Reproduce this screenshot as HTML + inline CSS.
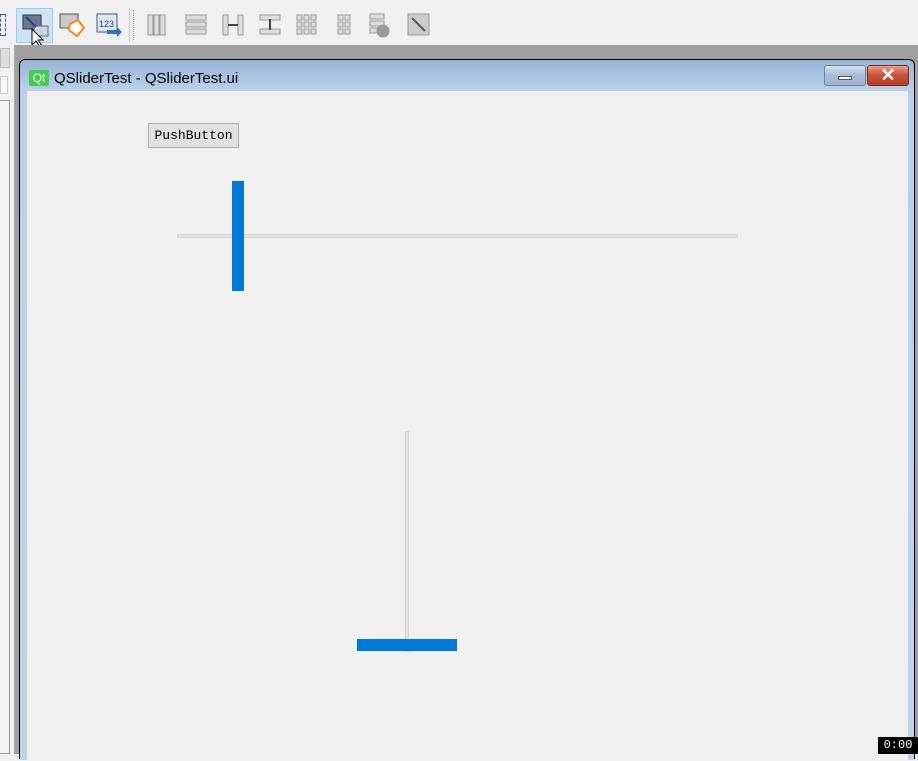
<!DOCTYPE html>
<html><head><meta charset="utf-8"><style>
*{margin:0;padding:0;box-sizing:border-box}
body{width:918px;height:754px;overflow:hidden;background:#f0f0f0;position:relative;font-family:"Liberation Sans",sans-serif}
.a{position:absolute}
</style></head><body>
<!-- toolbar -->
<div class="a" style="left:0;top:0;width:918px;height:45px;background:#f0f0f0"></div>
<div class="a" style="left:0;top:14px;width:6px;height:22px;border:1px dashed #3a5a9a"></div>
<div class="a" style="left:16px;top:8px;width:37px;height:35px;background:#cce4f7;border:1px solid #99c9ef"></div>
<svg class="a" style="left:16px;top:8px" width="37" height="38"><rect x="7" y="7" width="18" height="14" fill="#6a7a8a" stroke="#333"/><rect x="18" y="18" width="14" height="10" fill="#c8d4e0" stroke="#667"/><path d="M10 9 L20 19" stroke="#1a3f8f" stroke-width="2"/><path d="M16 21 L16 37 L20 33 L24 39 L26 38 L22 32 L27 32 Z" fill="#fff" stroke="#000"/></svg>
<svg class="a" style="left:58px;top:12px" width="28" height="26"><rect x="2" y="2" width="18" height="14" fill="#c8c8c8" stroke="#555"/><path d="M12 12 L20 8 L26 16 L19 24 L11 18 Z" fill="#fff" stroke="#f28a1e" stroke-width="2"/></svg>
<svg class="a" style="left:95px;top:12px" width="28" height="26"><rect x="2" y="2" width="20" height="18" fill="#dfe7f2" stroke="#3c5a8a"/><text x="4" y="15" font-size="9" fill="#1a3f8f" font-family="Liberation Sans">123</text><path d="M12 18 L22 18 L22 15 L27 20 L22 25 L22 22 L12 22Z" fill="#2b6fd0"/></svg>
<div class="a" style="left:129px;top:8px;width:1px;height:34px;background:#ccc"></div>
<div class="a" style="left:133px;top:10px;width:1px;height:30px;border-left:1px dotted #999"></div>
<svg class="a" style="left:145px;top:12px" width="290" height="26" fill="#ddd" stroke="#999">
<rect x="3" y="3" width="5" height="20"/><rect x="9" y="3" width="5" height="20"/><rect x="15" y="3" width="5" height="20"/>
<rect x="41" y="3" width="20" height="5"/><rect x="41" y="10" width="20" height="5"/><rect x="41" y="17" width="20" height="5"/>
<rect x="78" y="3" width="5" height="20"/><rect x="93" y="3" width="5" height="20"/><path d="M83 13 H93" stroke="#444" stroke-width="2"/>
<rect x="115" y="3" width="20" height="5"/><rect x="115" y="17" width="20" height="5"/><path d="M125 7 V18" stroke="#444" stroke-width="2"/>
<g><rect x="152" y="3" width="5" height="5"/><rect x="159" y="3" width="5" height="5"/><rect x="166" y="3" width="5" height="5"/><rect x="152" y="10" width="5" height="5"/><rect x="159" y="10" width="5" height="5"/><rect x="166" y="10" width="5" height="5"/><rect x="152" y="17" width="5" height="5"/><rect x="159" y="17" width="5" height="5"/><rect x="166" y="17" width="5" height="5"/></g>
<g><rect x="193" y="3" width="5" height="5"/><rect x="200" y="3" width="5" height="5"/><rect x="193" y="10" width="5" height="5"/><rect x="200" y="10" width="5" height="5"/><rect x="193" y="17" width="5" height="5"/><rect x="200" y="17" width="5" height="5"/></g>
<rect x="225" y="2" width="14" height="5"/><rect x="225" y="9" width="14" height="5"/><rect x="225" y="16" width="10" height="5"/><circle cx="238" cy="19" r="6" fill="#999"/>
<rect x="263" y="2" width="21" height="21" fill="#ccc"/><path d="M267 6 L280 19" stroke="#555" stroke-width="2"/>
</svg>
<!-- left panel -->
<div class="a" style="left:0;top:45px;width:15px;height:709px;background:#f0f0f0;border-right:1px solid #aaa"></div>
<div class="a" style="left:0;top:48px;width:10px;height:20px;background:#ddd;border:1px solid #bbb"></div>
<div class="a" style="left:0;top:76px;width:8px;height:18px;border:1px solid #ccc;background:#f8f8f8"></div>
<div class="a" style="left:0;top:100px;width:10px;height:654px;border:1px solid #999;border-left:none;background:#f4f4f4"></div>
<!-- mdi area -->
<div class="a" style="left:15px;top:45px;width:903px;height:709px;background:#a0a0a0"></div>
<div class="a" style="left:19px;top:59px;width:896px;height:700px;background:#000;border-radius:6px 6px 0 0"></div>
<div class="a" style="left:20px;top:60px;width:894px;height:700px;background:linear-gradient(#98b4d4,#b8d0ea 30px,#bed4ec);border-radius:5px 5px 0 0"></div>
<div class="a" style="left:27px;top:91px;width:881px;height:670px;background:#f0f0f0"></div>
<div class="a" style="left:29px;top:70px;width:20px;height:16px;background:#41cd52;border-radius:2px;color:#fff;font-size:12px;line-height:16px;text-align:center">Qt</div>
<div class="a" style="left:54px;top:70px;font-size:15px;line-height:18px;color:#000">QSliderTest - QSliderTest.ui</div>
<div class="a" style="left:824px;top:65px;width:42px;height:21px;border:1px solid #6d7f9a;border-radius:3px;background:linear-gradient(#d6e2f0,#a8bdd6 50%,#9cb2cc)"></div>
<div class="a" style="left:838px;top:76px;width:14px;height:4px;background:#fff;border:1px solid #556"></div>
<div class="a" style="left:867px;top:65px;width:42px;height:21px;border:1px solid #7a2a20;border-radius:3px;background:linear-gradient(#e6a090,#c8503a 50%,#b83c28)"></div>
<div class="a" style="left:867px;top:64px;width:42px;height:21px;color:#fff;font-size:18px;font-weight:bold;text-align:center;line-height:22px">✕</div>
<!-- widgets -->
<div class="a" style="left:148px;top:123px;width:91px;height:25px;background:#e1e1e1;border:1px solid #adadad;font-family:'Liberation Mono',monospace;font-size:13px;line-height:23px;text-align:center;color:#000">PushButton</div>
<div class="a" style="left:177px;top:234px;width:561px;height:4px;background:#e2e2e2;border:1px solid #d6d6d6"></div>
<div class="a" style="left:232px;top:181px;width:12px;height:110px;background:#0078d7"></div>
<div class="a" style="left:405px;top:431px;width:4px;height:221px;background:#e2e2e2;border:1px solid #d6d6d6"></div>
<div class="a" style="left:357px;top:639px;width:100px;height:12px;background:#0078d7"></div>
<div class="a" style="left:878px;top:737px;width:40px;height:17px;background:#000;color:#fff;font-family:'Liberation Mono',monospace;font-size:12px;line-height:17px;text-align:center">0:00</div>
</body></html>
